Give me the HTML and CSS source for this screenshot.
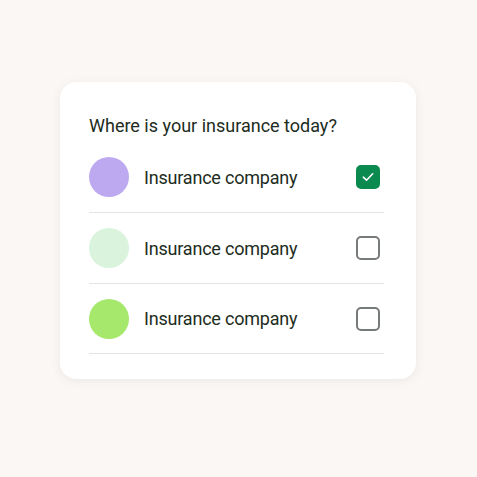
FILE: index.html
```html
<!DOCTYPE html>
<html lang="en">

<head>
    <meta charset="UTF-8">
    <meta name="viewport" content="width=device-width, initial-scale=1.0">
    <title>Insurance picker</title>
    <link rel="stylesheet" href="styles.css">
</head>

<body>
    <div class="card">
        <h2 class="question">Where is your insurance today?</h2>
        <ul class="options">
            <li class="option">
                <span class="dot dot-purple"></span>
                <span class="label">Insurance company</span>
                <span class="check checked">
                    <svg width="12" height="10" viewBox="0 0 12 10">
                        <path d="M1.3 5.2 L4.5 8.2 L10.7 1.8" fill="none" stroke="#fff" stroke-width="1.6" stroke-linecap="round" stroke-linejoin="round" />
                    </svg>
                </span>
            </li>
            <li class="option">
                <span class="dot dot-mint"></span>
                <span class="label">Insurance company</span>
                <span class="check"></span>
            </li>
            <li class="option">
                <span class="dot dot-lime"></span>
                <span class="label">Insurance company</span>
                <span class="check"></span>
            </li>
        </ul>
    </div>
</body>

</html>
```

FILE: styles.css
```css
* {
    margin: 0;
    padding: 0;
    box-sizing: border-box;
}

body {
    background: #faf7f5;
    height: 100vh;
    font-family: "Roboto", "Noto Sans", sans-serif;
    color: #1d2c21;
    padding: 82px 0 0 60px;
}

.card {
    width: 356px;
    height: 297px;
    background: #fff;
    border-radius: 16px;
    box-shadow: 0 2px 10px rgba(120, 100, 90, 0.10);
    padding: 30px 32px 0 29px;
}

.question {
    font-size: 18px;
    font-weight: 400;
    line-height: 28px;
    margin-bottom: 2px;
}

.options {
    list-style: none;
}

.option {
    display: flex;
    align-items: center;
    height: 71px;
    border-bottom: 1px solid #e4e4e4;
}

.option:last-child {
    height: 70px;
}

.dot {
    width: 40px;
    height: 40px;
    border-radius: 50%;
    flex-shrink: 0;
}

.dot-purple {
    background: #bca9f0;
}

.dot-mint {
    background: #daf3dd;
}

.dot-lime {
    background: #a5e86b;
}

.label {
    flex: 1;
    margin-left: 15px;
    font-size: 18px;
    letter-spacing: -0.2px;
}

.check {
    width: 24px;
    height: 24px;
    border: 2px solid #767b78;
    border-radius: 5px;
    margin-right: 4px;
    display: flex;
    align-items: center;
    justify-content: center;
}

.check.checked {
    background: #0a8a4f;
    border-color: #0a8a4f;
}
```
